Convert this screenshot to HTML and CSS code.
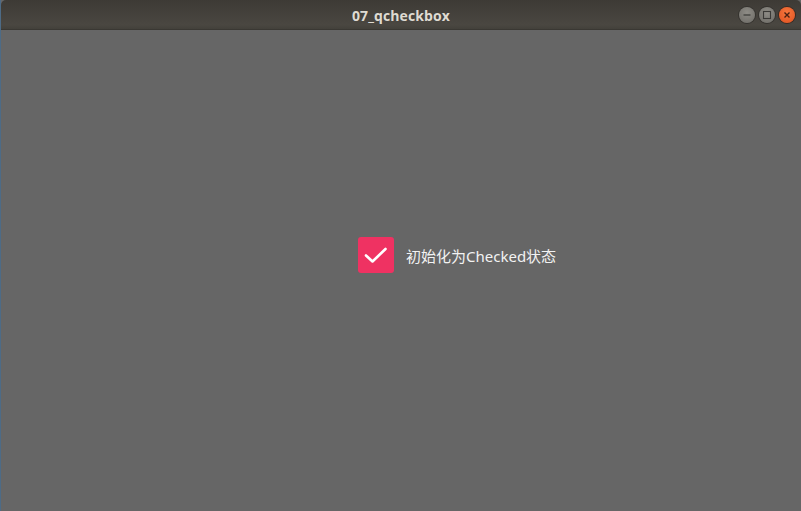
FILE: index.html
```html
<!DOCTYPE html>
<html>
<head>
<meta charset="utf-8">
<link rel="stylesheet" href="styles.css">
</head>
<body>
<div class="window">
  <div class="titlebar">
    <div class="title">07_qcheckbox</div>
    <div class="controls">
      <span class="btn btn-min"><svg width="16" height="16" viewBox="0 0 16 16"><line x1="4.5" y1="8" x2="11.5" y2="8" stroke="#3a3936" stroke-width="1.2"/></svg></span>
      <span class="btn btn-max"><svg width="16" height="16" viewBox="0 0 16 16"><rect x="4.5" y="4.5" width="7" height="7" fill="none" stroke="#3a3936" stroke-width="1.1"/></svg></span>
      <span class="btn btn-close"><svg width="16" height="16" viewBox="0 0 16 16"><path d="M5.5 5.5 L10.5 10.5 M10.5 5.5 L5.5 10.5" stroke="#4a2012" stroke-width="1.4"/></svg></span>
    </div>
  </div>
  <div class="content">
    <label class="check">
      <span class="box"><svg width="36" height="36" viewBox="0 0 36 36"><path d="M8 18.5 L14.5 24.5 L27.5 12" fill="none" stroke="#ffffff" stroke-width="2.6" stroke-linecap="round" stroke-linejoin="round"/></svg></span>
      <span class="label">初始化为Checked状态</span>
    </label>
  </div>
</div>
</body>
</html>
```

FILE: styles.css
```css
html, body {
  margin: 0;
  padding: 0;
  width: 801px;
  height: 511px;
  overflow: hidden;
  background: #4d6b86;
}
.window {
  margin-left: 1px;
  width: 800px;
  height: 511px;
  display: flex;
  flex-direction: column;
  background: #666666;
}
.titlebar {
  height: 30px;
  flex: none;
  display: grid;
  grid-template-columns: 1fr auto 1fr;
  align-items: center;
  background: linear-gradient(#3d3a35, #4a4741 85%, #43413b);
  border-radius: 5px 5px 0 0;
  border-bottom: 1px solid #3a3833;
  box-sizing: border-box;
}
.title {
  grid-column: 2;
  font-family: "Open Sans", "DejaVu Sans", sans-serif;
  font-weight: 700;
  font-size: 14px;
  color: #dfdbd2;
  letter-spacing: 0.1px;
  padding-top: 1px;
}
.controls {
  grid-column: 3;
  justify-self: end;
  display: flex;
  gap: 4px;
  padding-right: 6px;
  padding-top: 1px;
}
.btn {
  width: 16px;
  height: 16px;
  border-radius: 50%;
  display: block;
  box-sizing: border-box;
}
.btn svg { display: block; }
.btn-min, .btn-max {
  background: radial-gradient(circle at 50% 35%, #8e8c86, #6c6a65);
  box-shadow: 0 0 0 1px #35332f;
}
.btn-close {
  background: radial-gradient(circle at 50% 35%, #f6773e, #e0501f);
  box-shadow: 0 0 0 1px #3a2a22;
}
.content {
  flex: 1;
  padding: 207px 0 0 357px;
}
.check {
  display: flex;
  align-items: center;
  gap: 12px;
}
.box {
  width: 36px;
  height: 36px;
  border-radius: 3px;
  background: #ef3262;
  display: block;
}
.box svg { display: block; }
.label {
  font-family: "Noto Sans", "Noto Sans CJK SC", sans-serif;
  font-size: 15px;
  color: #f2f2f2;
}
```
